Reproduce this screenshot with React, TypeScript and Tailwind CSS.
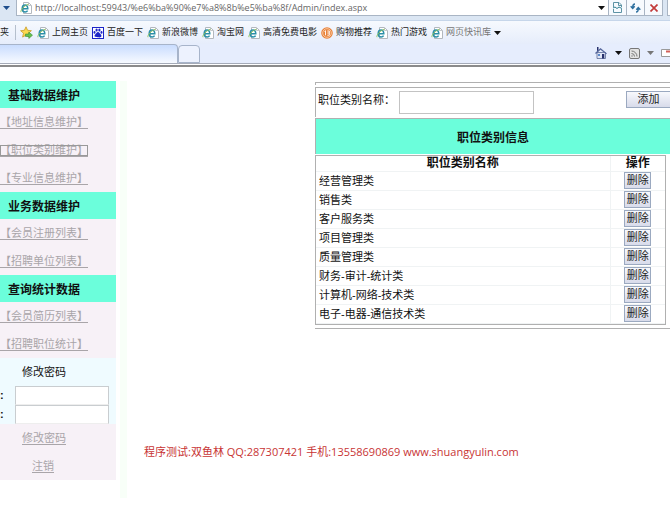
import React from 'react';

const bookmarks = [
  { label: '上网主页', icon: 'ie' },
  { label: '百度一下', icon: 'baidu' },
  { label: '新浪微博', icon: 'ie' },
  { label: '淘宝网', icon: 'ie' },
  { label: '高清免费电影', icon: 'ie' },
  { label: '购物推荐', icon: 'shop' },
  { label: '热门游戏', icon: 'ie' },
];

const menu = [
  { title: '基础数据维护', items: ['【地址信息维护】', '【职位类别维护】', '【专业信息维护】'] },
  { title: '业务数据维护', items: ['【会员注册列表】', '【招聘单位列表】'] },
  { title: '查询统计数据', items: ['【会员简历列表】', '【招聘职位统计】'] },
];

const categories = [
  '经营管理类',
  '销售类',
  '客户服务类',
  '项目管理类',
  '质量管理类',
  '财务-审计-统计类',
  '计算机-网络-技术类',
  '电子-电器-通信技术类',
];

function PageIcon() {
  return (
    <svg className="h-3 w-3 shrink-0" viewBox="0 0 12 12" fill="none">
      <path d="M3.5 .5h5l3 3v8h-8z" fill="#fff" stroke="#b3b8be" />
      <path d="M8.5 .5v3h3" stroke="#c4c8cc" />
      <path d="M2.4 6.8h5.4c0-2.4-1.1-3.7-2.8-3.7S2.2 4.5 2.2 6.7 3.4 10 5.1 10c1.2 0 2-.5 2.5-1.4" stroke="#2b8fa8" strokeWidth="1.5" />
      <path d="M1 10.2C0 8.5 4.5 3.3 8.5 2.2" stroke="#8cc152" strokeWidth=".9" />
    </svg>
  );
}

function BaiduIcon() {
  return (
    <svg className="h-3 w-3 shrink-0" viewBox="0 0 12 12">
      <path d="M0 0h12v12H0z" fill="#1c24c8" />
      <path d="M1 1h10v10H1z" fill="#fff" />
      <g fill="#1c24c8">
        <ellipse cx="4.6" cy="3" rx="1.1" ry="1.5" />
        <ellipse cx="7.4" cy="3" rx="1.1" ry="1.5" />
        <ellipse cx="2.5" cy="5.4" rx="1" ry="1.3" />
        <ellipse cx="9.5" cy="5.4" rx="1" ry="1.3" />
        <path d="M6 5c1.2 0 1.5 1.2 2.3 2 .9.8 1.3 1.4 1.1 2.3-.2 1.1-1.4 1.3-3.4 1s-3.2.1-3.4-1c-.2-.9.2-1.5 1.1-2.3C4.5 6.2 4.8 5 6 5z" />
      </g>
    </svg>
  );
}

function ShopIcon() {
  return (
    <svg className="h-3 w-3 shrink-0" viewBox="0 0 12 12" fill="none">
      <circle cx="6" cy="6" r="5.8" fill="#e8813a" />
      <circle cx="6" cy="6" r="4.3" stroke="#fbd9b8" strokeWidth=".8" />
      <path d="M3.5 4.5l1-.8v4.6M6.3 4h2v4.2h-2M6.3 6h2" stroke="#fff" strokeWidth=".9" />
    </svg>
  );
}

function StarIcon() {
  return (
    <svg className="h-[13px] w-[13px] shrink-0" viewBox="0 0 13 13">
      <path d="M6 .8l1.6 3.5 3.8.4-2.9 2.5.9 3.9L6 9.2l-3.4 1.9.9-3.9L.6 4.7l3.8-.4z" fill="#fbd94e" stroke="#c99a2b" strokeWidth=".8" />
      <path d="M5.5 8h3.3V6l3.7 3.2-3.7 3.3v-2H5.5z" fill="#63c04d" stroke="#3d8f35" strokeWidth=".6" />
    </svg>
  );
}

function Caret({ color = '#111' }: { color?: string }) {
  return (
    <svg className="h-[4px] w-[7px] shrink-0" viewBox="0 0 7 4">
      <path d="M0 0h7L3.5 4z" fill={color} />
    </svg>
  );
}

function BookmarkIcon({ name }: { name: string }) {
  if (name === 'baidu') return <BaiduIcon />;
  if (name === 'shop') return <ShopIcon />;
  return <PageIcon />;
}

function AddressBar() {
  return (
    <div className="flex h-[20px] items-start bg-[#dbe6f3]">
      <button aria-label="最近页面" className="flex h-[15px] w-[16px] items-center pl-[3px]">
        <Caret color="#1f4e8c" />
      </button>
      <div className="flex h-[16px] flex-1 items-center border-b border-l border-[#a9b5c4] bg-white pl-[3px]">
        <PageIcon />
        <input
          aria-label="地址"
          className="ml-[3px] h-[15px] min-w-0 flex-1 bg-transparent font-['Open_Sans','Noto_Sans_CJK_SC',sans-serif] text-[9px] text-[#666] outline-none"
          defaultValue="http://localhost:59943/%e6%ba%90%e7%a8%8b%e5%ba%8f/Admin/index.aspx"
        />
        <button aria-label="展开地址" className="flex h-[15px] w-[10px] items-center">
          <Caret />
        </button>
      </div>
      <button aria-label="兼容性视图" className="flex h-[16px] w-[18px] items-center justify-center border-b border-l border-[#a9b5c4] bg-[#f7fafe]">
        <svg className="h-[11px] w-[9px]" viewBox="0 0 9 11" fill="none">
          <path d="M.5 5V.5H6L8.5 3v2M.5 7v3.5h8V7M5.5.5v3h3" stroke="#5d93a5" />
          <path d="M0 6l2-1 2 1.5 2-1.5 3 1.5" stroke="#2f7f93" />
        </svg>
      </button>
      <button aria-label="刷新" className="flex h-[16px] w-[18px] items-center justify-center border-b border-l border-[#a9b5c4] bg-[#f7fafe]">
        <svg className="h-[10px] w-[11px]" viewBox="0 0 11 10" fill="none" stroke="#2d6f9f" strokeWidth="1.4">
          <path d="M5 1C3.2 1 2.7 2 2.7 4.5M.7 3.3l2 2.2 2-2.2M6 9c1.8 0 2.3-1 2.3-3.5M6.3 6.7l2-2.2 2 2.2" />
        </svg>
      </button>
      <button aria-label="停止" className="flex h-[16px] w-[19px] items-center justify-center border-x border-b border-[#a9b5c4] bg-[#f7fafe]">
        <svg className="h-2 w-2" viewBox="0 0 8 8" stroke="#c23a3a" strokeWidth="1.7">
          <path d="M.5.5l7 7M7.5.5l-7 7" />
        </svg>
      </button>
      <div className="ml-[4px] h-[16px] w-[3px] border-b border-l border-[#a9b5c4] bg-white" />
    </div>
  );
}

function BookmarkBar() {
  return (
    <div className="flex h-[24px] items-center gap-1 overflow-hidden whitespace-nowrap border-t border-[#c6d6ea] bg-linear-to-b from-[#f6f9fe] to-[#e6edfb] text-[9px] text-[#222]">
      <span className="w-[11px]">夹</span>
      <span className="h-[15px] w-px bg-[#b5bfcd]" />
      <button aria-label="添加到收藏夹">
        <StarIcon />
      </button>
      {bookmarks.map((b) => (
        <a key={b.label} href="#" className="flex shrink-0 items-center gap-[3px]">
          <BookmarkIcon name={b.icon} />
          {b.label}
        </a>
      ))}
      <button className="flex shrink-0 items-center gap-[3px] text-[#777]">
        <PageIcon />
        网页快讯库
        <Caret />
      </button>
    </div>
  );
}

function TabBar() {
  return (
    <div className="border-b-2 border-[#8b8b8b] bg-white pb-px">
      <div className="flex h-[20px] items-end border-b border-[#a5abb8] bg-[#e6edfd]">
        <div className="h-[19px] w-[178px] rounded-tr-sm border-r border-t border-[#a7b4ca] bg-linear-to-b from-[#c9dcfe] to-[#f7faff]" />
        <button aria-label="新选项卡" className="h-[18px] w-[22px] rounded-t-sm border border-[#a7b4ca] bg-[#edf2fe]" />
        <div className="ml-auto flex h-[20px] items-center">
          <button aria-label="主页">
            <svg className="h-3 w-3" viewBox="0 0 12 12">
              <path d="M2 5.5h8.5v6H2z" fill="#dfe5f5" stroke="#5d6c98" strokeWidth=".8" />
              <path d="M0 6l5.5-5L12 6.5l-1 .8-5.5-4.5L1 7z" fill="#56679c" />
              <path d="M2 0h1.5v3L2 4.2zM7 7h2.3v4.5H7z" fill="#29336e" />
              <path d="M3 7h2v2H3z" fill="#5c88c9" />
            </svg>
          </button>
          <button aria-label="主页菜单" className="flex w-[22px] justify-center">
            <Caret />
          </button>
          <button aria-label="源">
            <svg className="h-[11px] w-[11px]" viewBox="0 0 11 11" fill="none" stroke="#777">
              <rect x=".5" y=".5" width="10" height="10" rx="1.5" fill="#e3e3e3" />
              <path d="M2.5 5.5a3 3 0 013 3M2.5 3a5.5 5.5 0 015.5 5.5" />
              <circle cx="3" cy="8" r=".7" fill="#777" stroke="none" />
            </svg>
          </button>
          <button aria-label="源菜单" className="flex w-[21px] justify-center">
            <Caret color="#777" />
          </button>
          <button aria-label="阅读邮件">
            <svg className="h-2 w-[9px]" viewBox="0 0 9 8" fill="none">
              <path d="M9 .5H.5v7H9" fill="#fff" stroke="#9a9a9a" />
              <path d="M5 1.5h4v2H5z" fill="#d2605a" />
            </svg>
          </button>
        </div>
      </div>
    </div>
  );
}

function Sidebar() {
  return (
    <nav className="flex shrink-0">
      <div className="w-[116px]">
        {menu.map((group) => (
          <section key={group.title} className="bg-[#f7f1f7]">
            <h2 className="flex h-[27px] items-center bg-[#6bfedb] pl-2 pt-[2px] text-[12px] font-bold">{group.title}</h2>
            <ul>
              {group.items.map((item) => (
                <li key={item} className="flex h-7 items-center whitespace-nowrap pt-px text-[#a9a5a9]">
                  <a
                    href="#"
                    className={
                      item === '【职位类别维护】'
                        ? 'underline underline-offset-2 leading-[11px] outline outline-[#999] -outline-offset-1'
                        : 'underline underline-offset-2'
                    }
                  >
                    {item}
                  </a>
                </li>
              ))}
            </ul>
          </section>
        ))}
        <form className="bg-[#effbff]" onSubmit={(e) => e.preventDefault()}>
          <div className="flex h-7 items-center pl-[22px]">修改密码</div>
          <label className="flex h-[19px] items-center font-bold">
            <span className="w-[15px]">:</span>
            <input type="password" aria-label="新密码" className="h-[19px] w-[94px] border border-[#c9cdd0] border-b-[#eee] bg-white px-1" />
          </label>
          <label className="flex h-[19px] items-center font-bold">
            <span className="w-[15px]">:</span>
            <input type="password" aria-label="确认密码" className="h-[19px] w-[94px] border border-[#c9cdd0] border-b-[#eee] bg-white px-1" />
          </label>
        </form>
        <div className="bg-[#f7f1f7] text-[#a9a5a9]">
          <div className="flex h-7 items-center pl-[22px]">
            <a href="#" className="underline underline-offset-2">修改密码</a>
          </div>
          <div className="flex h-7 items-center pl-[32px]">
            <a href="#" className="underline underline-offset-2">注销</a>
          </div>
        </div>
      </div>
      <div className="-mb-[18px] ml-1 w-[7px] bg-[#f8fff8]" />
    </nav>
  );
}

function CategoryPanel() {
  const buttonStyle = 'border border-[#9ba9c0] bg-linear-to-b from-[#f8f9fd] to-[#d8dbea] text-[#222]';
  return (
    <div className="ml-[188px] min-w-0 flex-1 border-b border-[#b0b0b0] pb-[3px]">
      <div className="mt-px h-[3px] border-l border-t border-[#b0b0b0]" />
      <form
        className="mt-[2px] flex h-[30px] items-start border-l border-t border-[#b0b0b0] pl-[2px] pt-[3px]"
        onSubmit={(e) => e.preventDefault()}
      >
        <label htmlFor="category" className="w-[81px] leading-[18px]">职位类别名称：</label>
        <input id="category" type="text" className="h-[23px] w-[135px] border border-[#c3c3c3] bg-white px-1" />
        <button type="submit" className={`ml-auto h-[17px] w-[44px] border-r-0 leading-[15px] ${buttonStyle}`}>添加</button>
      </form>
      <h1 className="mb-px mt-px flex h-[36px] items-center justify-center border-l border-t border-[#b0b0b0] bg-[#6bfedb] pt-[2px] text-[12px] font-bold">
        职位类别信息
      </h1>
      <div className="mr-[4px] border border-[#b0b0b0]">
        <table className="w-full table-fixed border-collapse">
          <thead>
            <tr className="h-[15px] text-[12px] leading-[14px]">
              <th className="border-b border-r border-[#f0f3f4] p-0">职位类别名称</th>
              <th className="w-[55px] border-b border-[#f0f3f4] p-0">操作</th>
            </tr>
          </thead>
          <tbody>
            {categories.map((name) => (
              <tr key={name} className="h-[19px]">
                <td className="border-b border-r border-[#f0f3f4] p-0 pl-[3px] leading-4">{name}</td>
                <td className="border-b border-[#f0f3f4] p-0 text-center">
                  <button className={`mx-auto block h-[17px] w-[27px] leading-[15px] ${buttonStyle}`}>删除</button>
                </td>
              </tr>
            ))}
          </tbody>
        </table>
      </div>
    </div>
  );
}

function App() {
  return (
    <div className="min-h-screen overflow-hidden bg-white font-['Liberation_Sans','Noto_Sans_CJK_SC',sans-serif] text-[11px] text-[#111]">
      <header>
        <AddressBar />
        <BookmarkBar />
        <TabBar />
      </header>
      <div className="flex items-start pt-[14px]">
        <Sidebar />
        <main className="flex min-w-0 flex-1 flex-col">
          <CategoryPanel />
          <footer className="ml-[17px] mt-[115px] whitespace-nowrap font-['Open_Sans','Noto_Sans_CJK_SC',sans-serif] leading-4 text-[#c83434]">
            程序测试:双鱼林 QQ:287307421 手机:13558690869 www.shuangyulin.com
          </footer>
        </main>
      </div>
    </div>
  );
}

export default App;
